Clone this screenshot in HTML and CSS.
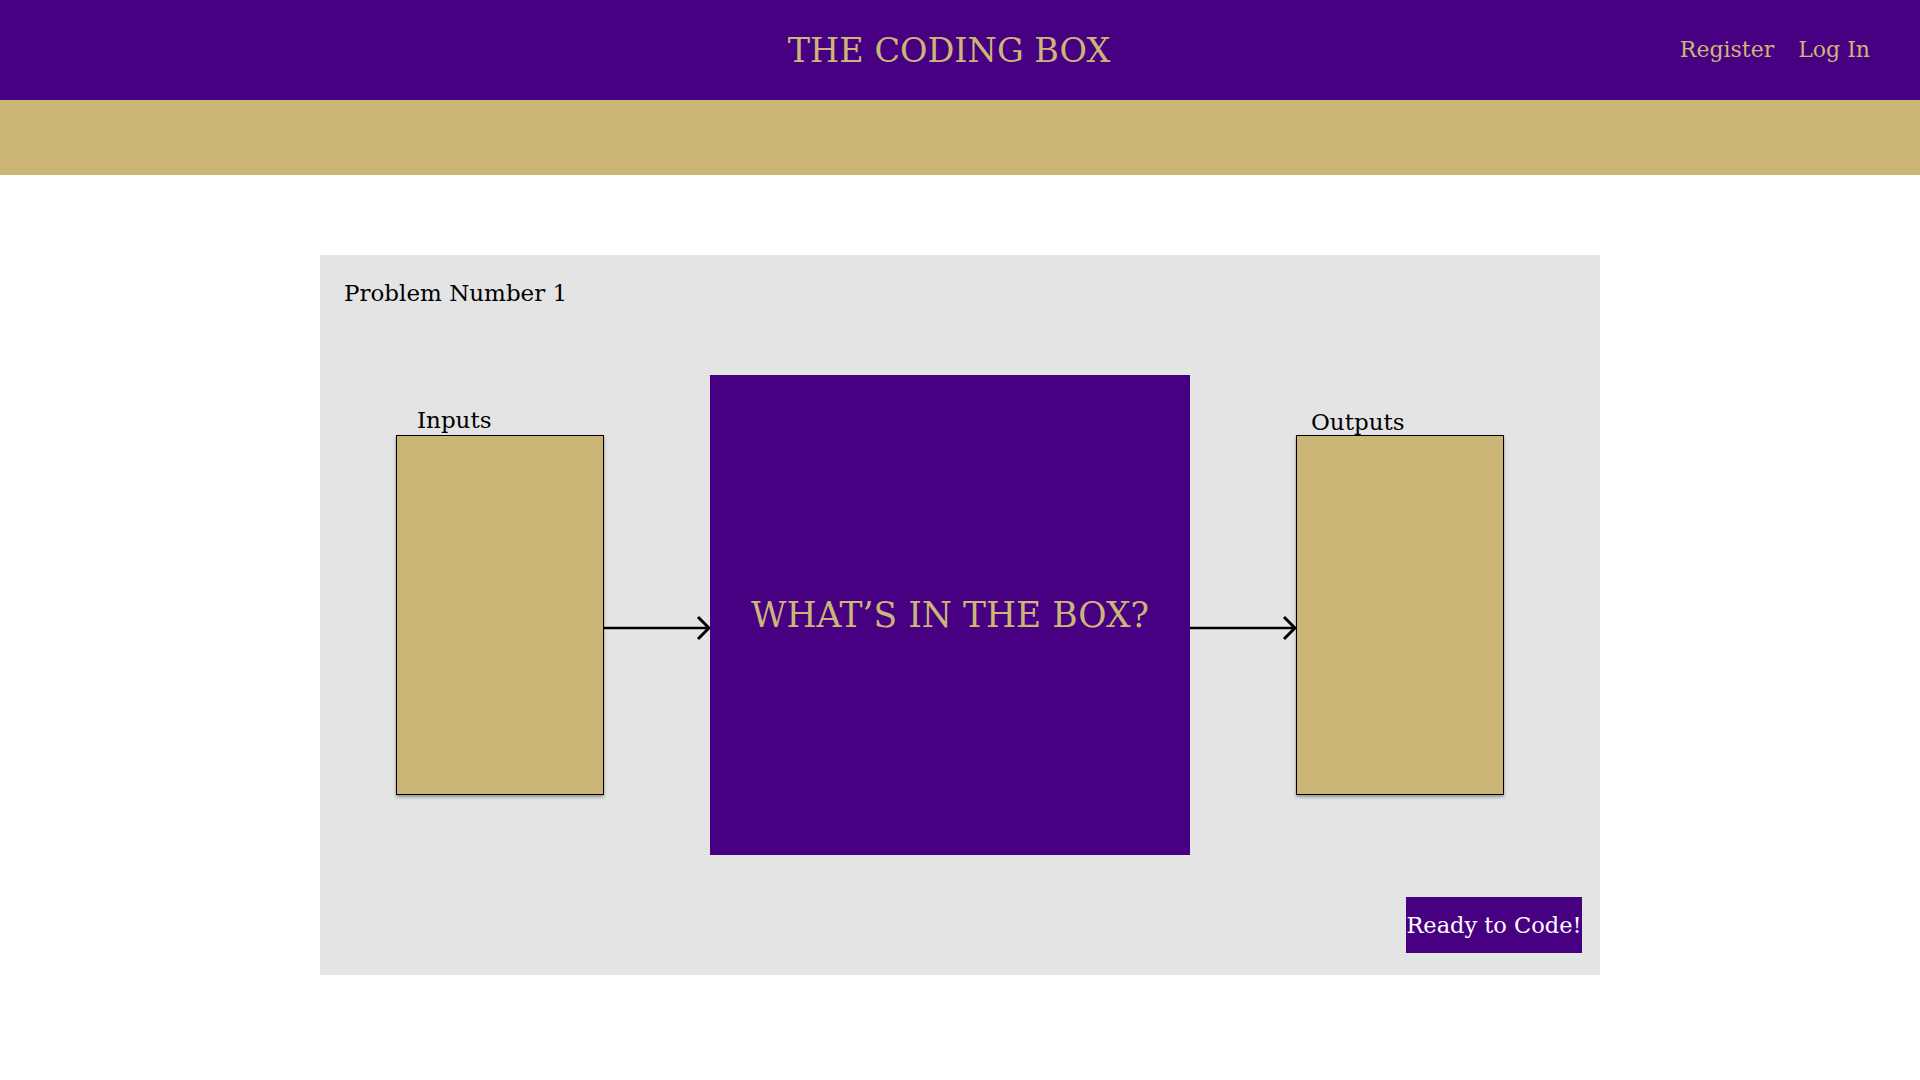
FILE: index.html
```
<!DOCTYPE html>
<html lang="en">
<head>
<meta charset="utf-8">
<title>The Coding Box</title>
<link rel="stylesheet" href="styles.css">
</head>
<body>
<header class="topbar">
  <div class="spacer"></div>
  <h1 class="brand">THE CODING BOX</h1>
  <nav class="nav">
    <a href="#" class="nav-link">Register</a>
    <a href="#" class="nav-link">Log In</a>
  </nav>
</header>
<div class="goldband"></div>
<main class="page">
  <section class="card">
    <h2 class="problem-title">Problem Number 1</h2>
    <div class="diagram">
      <div class="io io-in">
        <div class="io-label">Inputs</div>
        <div class="io-box"></div>
      </div>
      <svg class="arrow" width="106" height="30" viewBox="0 0 106 30">
        <line x1="0" y1="15" x2="104" y2="15" stroke="#000" stroke-width="2.5"/>
        <polyline points="94,4 105,15 94,26" fill="none" stroke="#000" stroke-width="3"/>
      </svg>
      <div class="blackbox">WHAT’S IN THE BOX?</div>
      <svg class="arrow" width="106" height="30" viewBox="0 0 106 30">
        <line x1="0" y1="15" x2="104" y2="15" stroke="#000" stroke-width="2.5"/>
        <polyline points="94,4 105,15 94,26" fill="none" stroke="#000" stroke-width="3"/>
      </svg>
      <div class="io io-out">
        <div class="io-label">Outputs</div>
        <div class="io-box"></div>
      </div>
    </div>
    <div class="actions">
      <button class="code-btn">Ready to Code!</button>
    </div>
  </section>
</main>
</body>
</html>
```
FILE: styles.css
```
* { box-sizing: border-box; }
html, body { margin: 0; padding: 0; }
body {
  background: #ffffff;
  font-family: "DejaVu Serif", "Liberation Serif", serif;
  color: #000;
}
.topbar {
  height: 100px;
  background: #480082;
  display: grid;
  grid-template-columns: 1fr auto 1fr;
  align-items: center;
  padding: 0 50px 0 0;
}
.brand {
  margin: 0;
  font-weight: normal;
  font-size: 33.5px;
  color: #cbb677;
  padding-left: 28px;
}
.nav {
  justify-self: end;
  display: flex;
  gap: 24px;
  padding-bottom: 2px;
}
.nav-link {
  color: #cbb677;
  text-decoration: none;
  font-size: 22px;
}
.goldband {
  height: 75px;
  background: #cbb677;
}
.page {
  padding: 80px 320px;
}
.card {
  background: #e4e4e4;
  height: 720px;
  padding: 23px 18px 22px 24px;
  display: flex;
  flex-direction: column;
}
.problem-title {
  margin: 0;
  font-weight: normal;
  font-size: 23px;
  line-height: 30px;
}
.diagram {
  margin-top: 67px;
  height: 480px;
  display: flex;
  align-items: center;
  padding-left: 52px;
}
.io {
  display: flex;
  flex-direction: column;
  padding-bottom: 30px;
}
.io-label {
  height: 30px;
  font-size: 23px;
  line-height: 30px;
}
.io-in .io-label { padding-left: 21px; }
.io-out .io-label { padding-left: 15px; line-height: 34px; }
.io-box {
  width: 208px;
  height: 360px;
  background: #cbb677;
  border: 1px solid #000;
  box-shadow: 0 2px 3px rgba(0,0,0,0.35);
}
.arrow {
  display: block;
  margin-top: 26px;
  flex: none;
}
.blackbox {
  width: 480px;
  height: 480px;
  background: #480082;
  color: #cbb677;
  display: flex;
  align-items: center;
  justify-content: center;
  font-size: 34.5px;
  flex: none;
}
.actions {
  margin-top: auto;
  display: flex;
  justify-content: flex-end;
}
.code-btn {
  background: #480082;
  color: #ffffff;
  border: none;
  height: 56px;
  width: 176px;
  padding: 0;
  font-family: "DejaVu Serif", "Liberation Serif", serif;
  font-size: 22.5px;
}
```
